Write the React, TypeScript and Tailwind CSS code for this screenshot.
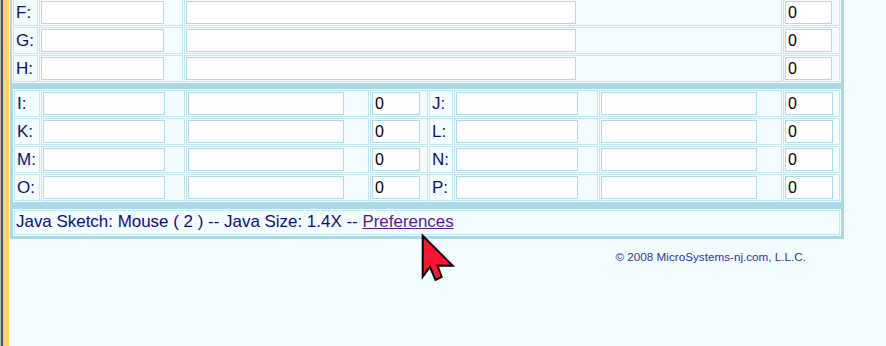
import React from "react";

const font = { fontFamily: '"Liberation Sans", Arial, sans-serif' };

function Cell({ className, children }: { className: string; children?: React.ReactNode }) {
  return (
    <div className={"flex h-full items-center border border-[#c6e6ef] bg-[#f3fdff] px-[1px] " + className}>
      {children}
    </div>
  );
}

function Label({ t }: { t: string }) {
  return <span className="pl-[1px] text-[17px] leading-none text-[#0c0c80]">{t}</span>;
}

function Inp({ className, v }: { className: string; v?: string }) {
  return (
    <div
      className={
        "flex h-[23px] items-center border border-[#b0d9e5] bg-white pl-[2px] text-[16px] leading-none text-black " +
        className
      }
    >
      {v}
    </div>
  );
}

function TopRow({ l }: { l: string }) {
  return (
    <div className="flex h-[27px] gap-[1px]">
      <Cell className="w-[25px]">
        <Label t={l} />
      </Cell>
      <Cell className="w-[144px]">
        <Inp className="w-[123px]" />
      </Cell>
      <Cell className="w-[598px]">
        <Inp className="w-[390px]" />
      </Cell>
      <Cell className="flex-1">
        <Inp className="w-[47px]" v="0" />
      </Cell>
    </div>
  );
}

function BottomRow({ a, b }: { a: string; b: string }) {
  return (
    <div className="flex h-[27px] gap-[1px]">
      <Cell className="w-[26px]">
        <Label t={a} />
      </Cell>
      <Cell className="w-[144px]">
        <Inp className="w-[122px]" />
      </Cell>
      <Cell className="w-[183px]">
        <Inp className="w-[156px]" />
      </Cell>
      <Cell className="w-[58px]">
        <Inp className="w-[48px]" v="0" />
      </Cell>
      <Cell className="w-[24px]">
        <Label t={b} />
      </Cell>
      <Cell className="w-[144px]">
        <Inp className="w-[122px]" />
      </Cell>
      <Cell className="w-[183px]">
        <Inp className="w-[156px]" />
      </Cell>
      <Cell className="flex-1">
        <Inp className="w-[48px]" v="0" />
      </Cell>
    </div>
  );
}

export default function App() {
  return (
    <div className="relative flex h-[346px] w-[886px] overflow-hidden bg-[#f3fdff]" style={font}>
      <div className="flex h-full w-[9px] shrink-0">
        <div className="h-full w-[1px] bg-[#b8b8b8]" />
        <div className="h-full w-[2px] bg-[#555555]" />
        <div className="h-full w-[6px] bg-[#fdd56c]" />
      </div>
      <div className="ml-[1px] flex w-[834px] flex-col">
        <div className="-mt-[4px] flex flex-col gap-[1px] border-2 border-r-[3px] border-[#add8e6] p-[1px]">
          <TopRow l="F:" />
          <TopRow l="G:" />
          <TopRow l="H:" />
        </div>
        <div className="flex flex-col gap-[1px] border-[3px] border-t-[4px] border-[#add8e6] p-[1px]">
          <BottomRow a="I:" b="J:" />
          <BottomRow a="K:" b="L:" />
          <BottomRow a="M:" b="N:" />
          <BottomRow a="O:" b="P:" />
        </div>
        <div className="flex border-[3px] border-t-[4px] border-[#add8e6] p-[1px]">
          <div className="flex h-[25px] flex-1 items-center border border-[#c6e6ef] bg-[#f3fdff] pl-[1px] text-[16.95px] leading-none text-[#0c0c80]">
            <span>Java Sketch: Mouse ( 2 ) -- Java Size: 1.4X --&nbsp;</span>
            <span className="text-[#551a8b] underline">Preferences</span>
          </div>
        </div>
        <div className="mt-[11px] flex justify-end pr-[38px] text-[11.7px] leading-[14px] text-[#30309a]">
          © 2008 MicroSystems-nj.com, L.L.C.
        </div>
      </div>
      <svg className="absolute left-[419px] top-[233px]" width="40" height="52" viewBox="0 0 40 52">
        <polygon
          points="3.7,2.7 3.7,43.7 11,34 16.5,47 22.7,44 18.5,32.5 33.7,32.7"
          fill="#ff1436"
          stroke="#000"
          strokeWidth="2"
          strokeLinejoin="miter"
        />
      </svg>
    </div>
  );
}
